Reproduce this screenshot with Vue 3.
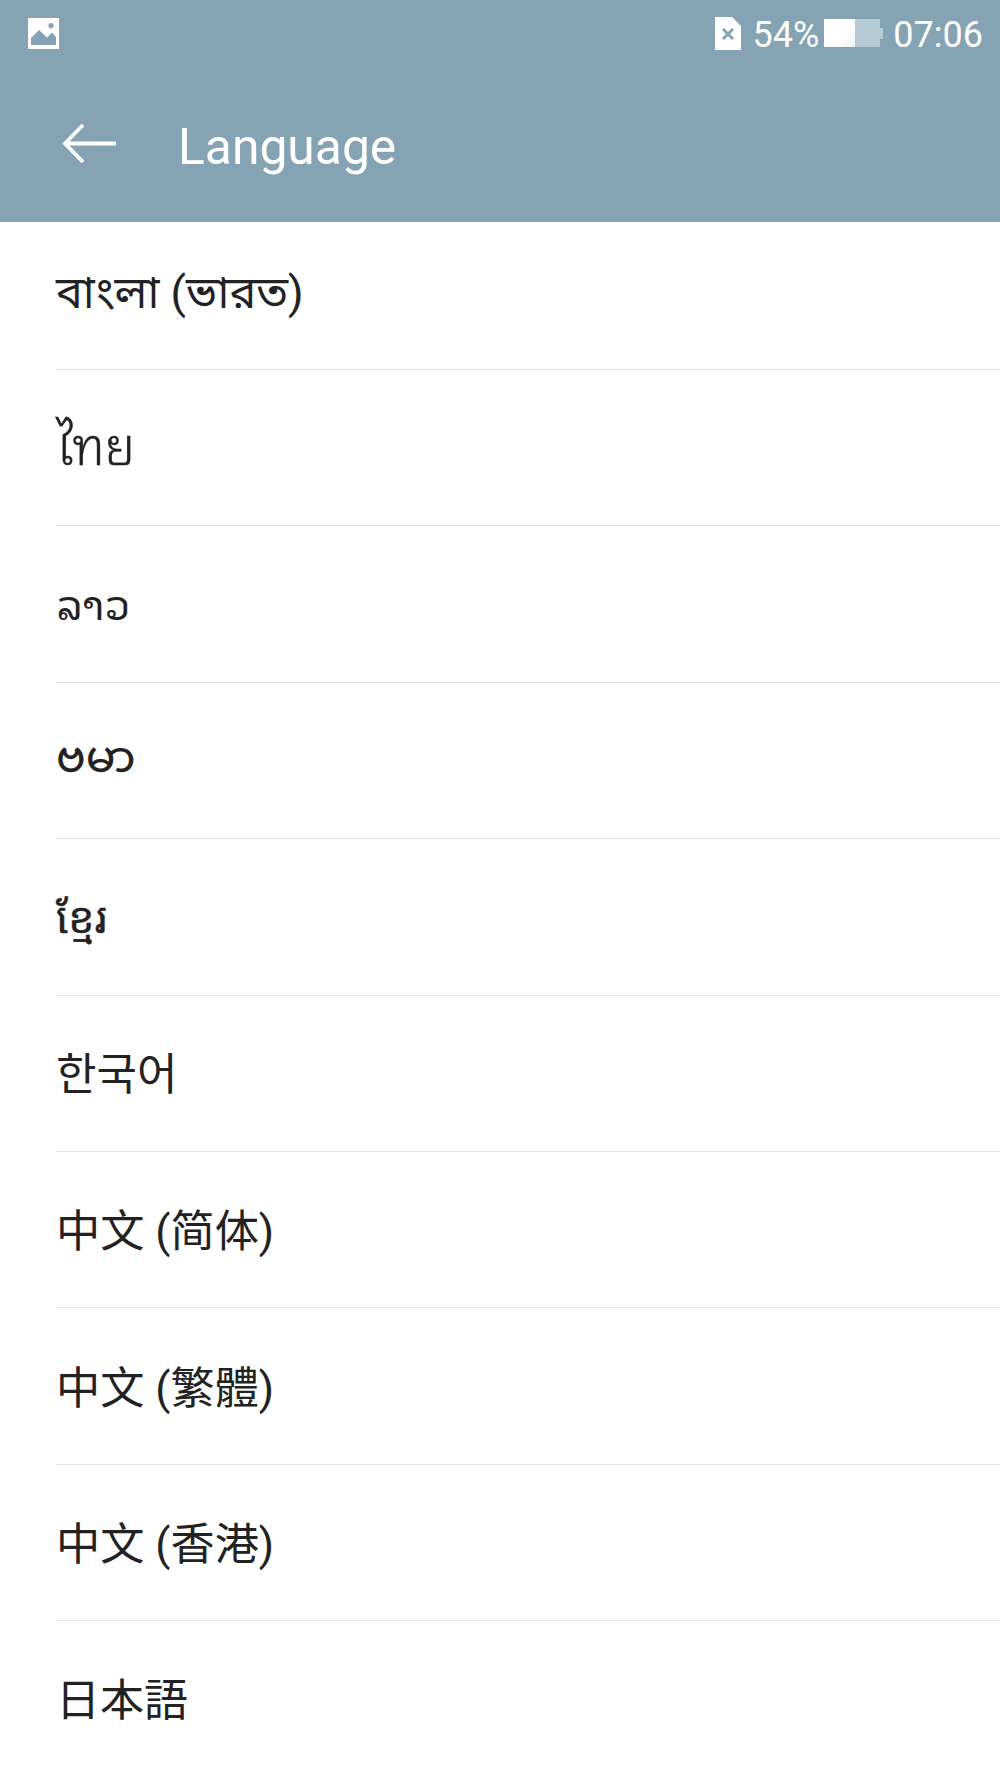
<script setup>
const languages = [
  { name: 'বাংলা (ভারত)', lang: 'bn' },
  { name: 'ไทย', lang: 'th' },
  { name: 'ລາວ', lang: 'lo' },
  { name: 'ဗမာ', lang: 'my' },
  { name: 'ខ្មែរ', lang: 'km' },
  { name: '한국어', lang: 'kr' },
  { name: '中文 (简体)', lang: 'sc' },
  { name: '中文 (繁體)', lang: 'tc' },
  { name: '中文 (香港)', lang: 'tc' },
  { name: '日本語', lang: 'jp' },
]
</script>

<template>
  <div class="screen">
    <header class="head">
      <div class="status">
        <svg class="pic" width="31" height="31" viewBox="0 0 31 31">
          <path fill="#fff" fill-rule="evenodd" d="M0 0H31V31H0ZM3 27H28V19L24 14.5 19 19.5 11 12 3 20ZM23 5a2.7 2.7 0 1 0 .01 0Z" />
        </svg>
        <div class="status-right">
          <svg class="sim" width="26" height="33" viewBox="0 0 26 33">
            <path fill="#fff" d="M0 0H17L26 9V33H0Z" />
            <path stroke="#86a3b3" stroke-width="3" d="M8 12 18 22M18 12 8 22" />
          </svg>
          <span class="pct">54%</span>
          <div class="battery"><div class="charge"></div><div class="rest"></div><div class="tip"></div></div>
          <span class="time">07:06</span>
        </div>
      </div>
      <div class="bar">
        <svg class="back" width="56" height="42" viewBox="0 0 56 42">
          <path fill="none" stroke="#fff" stroke-width="3.8" d="M54 20.5H3M21 2 3 20.5 21 39" />
        </svg>
        <h1>Language</h1>
      </div>
    </header>
    <ul class="list">
      <li v-for="l in languages" :key="l.name" class="row">
        <span :class="['label', l.lang]">{{ l.name }}</span>
      </li>
    </ul>
  </div>
</template>

<style>
html, body { margin: 0; background: #fff; }
</style>

<style scoped>
.screen {
  width: 1000px;
  height: 1777px;
  overflow: hidden;
  background: #fff;
  font-family: Roboto, "Noto Sans", sans-serif;
}
.head {
  height: 222px;
  background: #86a3b3;
  color: #fff;
}
.status {
  height: 66px;
  display: flex;
  align-items: center;
  justify-content: space-between;
  padding: 0 17px 0 28px;
}
.status-right {
  display: flex;
  align-items: center;
}
.pct, .time { font-size: 36px; padding-top: 4px; }
.sim { margin-right: 12px; }
.battery {
  display: flex;
  align-items: center;
  margin: 0 10px 0 5px;
}
.charge {
  width: 31px;
  height: 28px;
  background: linear-gradient(135deg, #fff 60%, #eef3f6);
}
.rest { width: 25px; height: 28px; background: #b6cad4; }
.tip { width: 3px; height: 11px; background: #b6cad4; }
.bar {
  display: flex;
  align-items: center;
  height: 156px;
  padding-left: 62px;
}
h1 {
  margin: 0 0 0 60px;
  padding-top: 6px;
  font-size: 49.8px;
  font-weight: 400;
}
.list {
  list-style: none;
  margin: 0;
  padding: 0 0 0 56px;
}
.row {
  height: 156.4px;
  box-sizing: border-box;
  display: flex;
  align-items: center;
  border-bottom: 1.5px solid #e2e2e2;
  font-size: 44px;
  color: #222;
}
.row:first-child { height: 148px; }
.row:last-child { border-bottom: 0; }
.label { font-family: Roboto, "Noto Sans", "Noto Sans CJK SC", sans-serif; }
.bn {
  font-family: Roboto, "Noto Sans Bengali", "Noto Sans", sans-serif;
  font-size: 45px;
}
.th {
  font-family: "Noto Sans Thai Looped", Roboto, "Noto Sans", sans-serif;
  font-size: 50.5px;
  font-weight: 300;
  padding-bottom: 10px;
  -webkit-text-stroke: 0.4px #222;
}
.lo {
  font-family: "Noto Sans Lao Looped", "Noto Sans Lao", Roboto, sans-serif;
  font-size: 41.5px;
  padding-bottom: 6px;
}
.my {
  font-family: "Noto Sans Myanmar", Roboto, "Noto Sans", sans-serif;
  font-size: 44px;
  padding-top: 3px;
  -webkit-text-stroke: 0.25px #222;
}
.km {
  font-family: "Noto Sans Khmer", Roboto, "Noto Sans", sans-serif;
  font-size: 42px;
  -webkit-text-stroke: 0.4px #222;
}
.sc { font-family: Roboto, "Noto Sans CJK SC", sans-serif; font-size: 44.2px; padding-bottom: 3px; }
.tc { font-family: Roboto, "Noto Sans CJK TC", sans-serif; font-size: 44.2px; padding-bottom: 3px; }
.kr { font-family: Roboto, "Noto Sans CJK KR", sans-serif; padding-bottom: 4px; }
.jp { font-family: Roboto, "Noto Sans CJK JP", sans-serif; padding-bottom: 4px; }
</style>
